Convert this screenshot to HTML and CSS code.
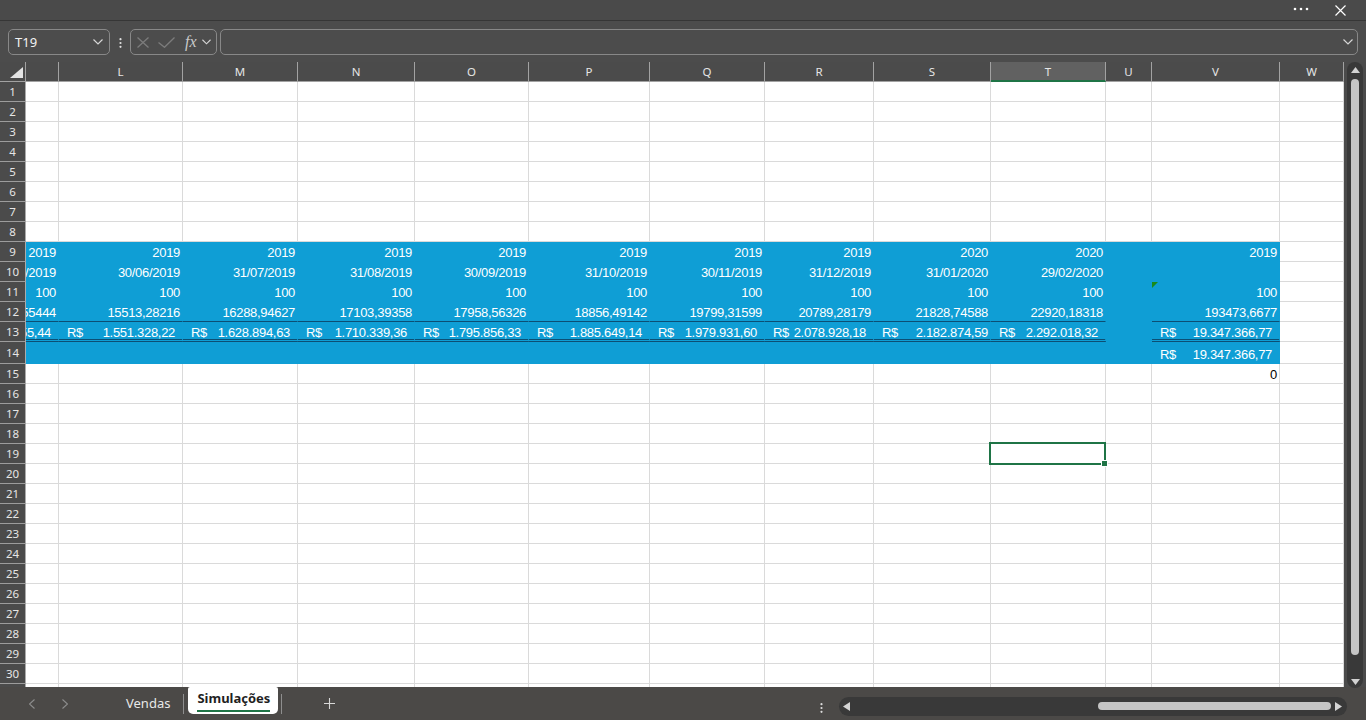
FILE: index.html
```html
<!DOCTYPE html>
<html lang="pt-BR">
<head>
    <meta charset="UTF-8">
    <meta name="viewport" content="width=device-width, initial-scale=1.0">
    <title>Simulações</title>
    <link rel="stylesheet" href="styles.css">
</head>
<body>
    <div class="titlebar">
        <svg class="more" width="16" height="4" viewBox="0 0 16 4"><circle cx="2" cy="2" r="1.3"/><circle cx="8" cy="2" r="1.3"/><circle cx="14" cy="2" r="1.3"/></svg>
        <svg class="close" width="11" height="11" viewBox="0 0 11 11"><path d="M0.5 0.5L10.5 10.5M10.5 0.5L0.5 10.5"/></svg>
    </div>

    <div class="formulabar">
        <div class="namebox">
            <span>T19</span>
            <svg class="chev" width="10" height="6" viewBox="0 0 10 6"><polyline points="0.5,0.5 5,5 9.5,0.5"/></svg>
        </div>
        <svg class="vdots" width="3" height="10" viewBox="0 0 3 10"><circle cx="1.5" cy="1.2" r="1.1"/><circle cx="1.5" cy="5" r="1.1"/><circle cx="1.5" cy="8.8" r="1.1"/></svg>
        <div class="fxbox">
            <svg class="cancel" width="12" height="11" viewBox="0 0 12 11"><path d="M0.5 0.5L11.5 10.5M11.5 0.5L0.5 10.5"/></svg>
            <svg class="enter" width="17" height="11" viewBox="0 0 17 11"><polyline points="0.5,5.5 6.5,10.3 16.5,0.5"/></svg>
            <span class="fx">fx</span>
            <svg class="chev" width="9" height="6" viewBox="0 0 10 6"><polyline points="0.5,0.5 5,5 9.5,0.5"/></svg>
        </div>
        <div class="formula">
            <svg class="chev" width="10" height="6" viewBox="0 0 10 6"><polyline points="0.5,0.5 5,5 9.5,0.5"/></svg>
        </div>
    </div>

    <div class="main">
        <div class="sheet">
            <div class="row head"><span class="corner"><svg width="13" height="11" viewBox="0 0 13 11"><polygon points="13,0 13,11 0,11"/></svg></span><span></span><span>L</span><span>M</span><span>N</span><span>O</span><span>P</span><span>Q</span><span>R</span><span>S</span><span class="on">T</span><span>U</span><span>V</span><span>W</span></div>

            <div class="row"><span class="rh">1</span><span></span><span></span><span></span><span></span><span></span><span></span><span></span><span></span><span></span><span></span><span></span><span></span><span></span></div>
            <div class="row"><span class="rh">2</span><span></span><span></span><span></span><span></span><span></span><span></span><span></span><span></span><span></span><span></span><span></span><span></span><span></span></div>
            <div class="row"><span class="rh">3</span><span></span><span></span><span></span><span></span><span></span><span></span><span></span><span></span><span></span><span></span><span></span><span></span><span></span></div>
            <div class="row"><span class="rh">4</span><span></span><span></span><span></span><span></span><span></span><span></span><span></span><span></span><span></span><span></span><span></span><span></span><span></span></div>
            <div class="row"><span class="rh">5</span><span></span><span></span><span></span><span></span><span></span><span></span><span></span><span></span><span></span><span></span><span></span><span></span><span></span></div>
            <div class="row"><span class="rh">6</span><span></span><span></span><span></span><span></span><span></span><span></span><span></span><span></span><span></span><span></span><span></span><span></span><span></span></div>
            <div class="row"><span class="rh">7</span><span></span><span></span><span></span><span></span><span></span><span></span><span></span><span></span><span></span><span></span><span></span><span></span><span></span></div>
            <div class="row"><span class="rh">8</span><span></span><span></span><span></span><span></span><span></span><span></span><span></span><span></span><span></span><span></span><span></span><span></span><span></span></div>

            <div class="row"><span class="rh">9</span><span class="f">2019</span><span class="f">2019</span><span class="f">2019</span><span class="f">2019</span><span class="f">2019</span><span class="f">2019</span><span class="f">2019</span><span class="f">2019</span><span class="f">2020</span><span class="f">2020</span><span class="f"></span><span class="f">2019</span><span></span></div>
            <div class="row"><span class="rh">10</span><span class="f">31/05/2019</span><span class="f">30/06/2019</span><span class="f">31/07/2019</span><span class="f">31/08/2019</span><span class="f">30/09/2019</span><span class="f">31/10/2019</span><span class="f">30/11/2019</span><span class="f">31/12/2019</span><span class="f">31/01/2020</span><span class="f">29/02/2020</span><span class="f"></span><span class="f"></span><span></span></div>
            <div class="row"><span class="rh">11</span><span class="f">100</span><span class="f">100</span><span class="f">100</span><span class="f">100</span><span class="f">100</span><span class="f">100</span><span class="f">100</span><span class="f">100</span><span class="f">100</span><span class="f">100</span><span class="f"></span><span class="f flag">100</span><span></span></div>
            <div class="row"><span class="rh">12</span><span class="f b1">14774,55444</span><span class="f b1">15513,28216</span><span class="f b1">16288,94627</span><span class="f b1">17103,39358</span><span class="f b1">17958,56326</span><span class="f b1">18856,49142</span><span class="f b1">19799,31599</span><span class="f b1">20789,28179</span><span class="f b1">21828,74588</span><span class="f b1">22920,18318</span><span class="f"></span><span class="f b1">193473,6677</span><span></span></div>
            <div class="row"><span class="rh">13</span><span class="f b2 pr">1.477.455,44</span><span class="f b2 acc"><em>R$</em>1.551.328,22</span><span class="f b2 acc"><em>R$</em>1.628.894,63</span><span class="f b2 acc"><em>R$</em>1.710.339,36</span><span class="f b2 acc"><em>R$</em>1.795.856,33</span><span class="f b2 acc"><em>R$</em>1.885.649,14</span><span class="f b2 acc"><em>R$</em>1.979.931,60</span><span class="f b2 acc"><em>R$</em>2.078.928,18</span><span class="f b2 acc tight"><em>R$</em>2.182.874,59</span><span class="f b2 acc"><em>R$</em>2.292.018,32</span><span class="f"></span><span class="f b2 acc"><em>R$</em>19.347.366,77</span><span></span></div>
            <div class="row tall"><span class="rh">14</span><span class="f"></span><span class="f"></span><span class="f"></span><span class="f"></span><span class="f"></span><span class="f"></span><span class="f"></span><span class="f"></span><span class="f"></span><span class="f"></span><span class="f"></span><span class="f acc"><em>R$</em>19.347.366,77</span><span></span></div>
            <div class="row"><span class="rh">15</span><span></span><span></span><span></span><span></span><span></span><span></span><span></span><span></span><span></span><span></span><span></span><span>0</span><span></span></div>

            <div class="row"><span class="rh">16</span><span></span><span></span><span></span><span></span><span></span><span></span><span></span><span></span><span></span><span></span><span></span><span></span><span></span></div>
            <div class="row"><span class="rh">17</span><span></span><span></span><span></span><span></span><span></span><span></span><span></span><span></span><span></span><span></span><span></span><span></span><span></span></div>
            <div class="row"><span class="rh">18</span><span></span><span></span><span></span><span></span><span></span><span></span><span></span><span></span><span></span><span></span><span></span><span></span><span></span></div>
            <div class="row"><span class="rh">19</span><span></span><span></span><span></span><span></span><span></span><span></span><span></span><span></span><span></span><span></span><span></span><span></span><span></span></div>
            <div class="row"><span class="rh">20</span><span></span><span></span><span></span><span></span><span></span><span></span><span></span><span></span><span></span><span></span><span></span><span></span><span></span></div>
            <div class="row"><span class="rh">21</span><span></span><span></span><span></span><span></span><span></span><span></span><span></span><span></span><span></span><span></span><span></span><span></span><span></span></div>
            <div class="row"><span class="rh">22</span><span></span><span></span><span></span><span></span><span></span><span></span><span></span><span></span><span></span><span></span><span></span><span></span><span></span></div>
            <div class="row"><span class="rh">23</span><span></span><span></span><span></span><span></span><span></span><span></span><span></span><span></span><span></span><span></span><span></span><span></span><span></span></div>
            <div class="row"><span class="rh">24</span><span></span><span></span><span></span><span></span><span></span><span></span><span></span><span></span><span></span><span></span><span></span><span></span><span></span></div>
            <div class="row"><span class="rh">25</span><span></span><span></span><span></span><span></span><span></span><span></span><span></span><span></span><span></span><span></span><span></span><span></span><span></span></div>
            <div class="row"><span class="rh">26</span><span></span><span></span><span></span><span></span><span></span><span></span><span></span><span></span><span></span><span></span><span></span><span></span><span></span></div>
            <div class="row"><span class="rh">27</span><span></span><span></span><span></span><span></span><span></span><span></span><span></span><span></span><span></span><span></span><span></span><span></span><span></span></div>
            <div class="row"><span class="rh">28</span><span></span><span></span><span></span><span></span><span></span><span></span><span></span><span></span><span></span><span></span><span></span><span></span><span></span></div>
            <div class="row"><span class="rh">29</span><span></span><span></span><span></span><span></span><span></span><span></span><span></span><span></span><span></span><span></span><span></span><span></span><span></span></div>
            <div class="row"><span class="rh">30</span><span></span><span></span><span></span><span></span><span></span><span></span><span></span><span></span><span></span><span></span><span></span><span></span><span></span></div>
            <div class="row"><span class="rh">31</span><span></span><span></span><span></span><span></span><span></span><span></span><span></span><span></span><span></span><span></span><span></span><span></span><span></span></div>

            <!-- active cell T19 -->
            <div class="selection"><i class="handle"></i></div>
        </div>

        <div class="vscroll">
            <div class="track">
                <svg width="9" height="6" viewBox="0 0 9 6"><polygon points="4.5,0 9,6 0,6"/></svg>
                <div class="vthumb"></div>
                <svg class="down" width="9" height="6" viewBox="0 0 9 6"><polygon points="0,0 9,0 4.5,6"/></svg>
            </div>
        </div>
    </div>

    <div class="tabbar">
        <div class="nav">
            <svg width="6" height="10" viewBox="0 0 6 10"><polyline points="5.5,0.5 0.5,5 5.5,9.5"/></svg>
            <svg width="6" height="10" viewBox="0 0 6 10"><polyline points="0.5,0.5 5.5,5 0.5,9.5"/></svg>
        </div>
        <span class="tab">Vendas</span>
        <span class="sep"></span>
        <span class="tab active"><span>Simulações</span></span>
        <span class="sep"></span>
        <svg class="plus" width="11" height="11" viewBox="0 0 11 11"><path d="M5.5 0V11M0 5.5H11"/></svg>

        <svg class="hdots" width="3" height="10" viewBox="0 0 3 10"><circle cx="1.5" cy="1.2" r="1.1"/><circle cx="1.5" cy="5" r="1.1"/><circle cx="1.5" cy="8.8" r="1.1"/></svg>
        <div class="htrack">
            <svg width="7" height="9" viewBox="0 0 7 9"><polygon points="7,0 7,9 0,4.5"/></svg>
            <div class="hthumb"></div>
            <svg width="7" height="9" viewBox="0 0 7 9"><polygon points="0,0 7,4.5 0,9"/></svg>
        </div>
    </div>
</body>
</html>
```

FILE: styles.css
```css
* {
    box-sizing: border-box;
}

body {
    margin: 0;
    width: 1366px;
    height: 720px;
    overflow: hidden;
    background: #4b4b4b;
    font-family: "Noto Sans", "Open Sans", sans-serif;
    color: #f0f0f0;
}

/* top strip */
.titlebar {
    height: 21px;
    background: #4a4a4a;
    border-bottom: 1px solid #363636;
    display: flex;
    justify-content: flex-end;
    align-items: center;
    gap: 26px;
    padding-right: 20px;
}
.more {
    fill: #fff;
    margin-bottom: 2px;
}
.close {
    fill: none;
    stroke: #fff;
    stroke-width: 1.2;
}

/* formula bar */
.formulabar {
    height: 41px;
    display: flex;
    align-items: flex-start;
    padding: 8px 8px 0 8px;
    background: #4c4c4c;
}
.chev {
    fill: none;
    stroke: #d6d6d6;
    stroke-width: 1.2;
}
.namebox {
    width: 102px;
    height: 26px;
    border: 1px solid #888;
    border-radius: 5px;
    display: flex;
    align-items: center;
    justify-content: space-between;
    padding: 0 6px;
    font-size: 13px;
    color: #f2f2f2;
}
.vdots {
    fill: #e0e0e0;
    margin: 9px 8px 0 9px;
}
.fxbox {
    width: 87px;
    height: 26px;
    border: 1px solid #888;
    border-radius: 5px;
    display: flex;
    align-items: center;
    padding-left: 6px;
    margin-right: 3px;
}
.cancel, .enter {
    fill: none;
    stroke: #7c7c7c;
    stroke-width: 1.3;
}
.enter {
    margin-left: 9px;
}
.fx {
    font-family: "Liberation Serif", "DejaVu Serif", serif;
    font-style: italic;
    font-size: 16px;
    color: #c9c9c9;
    margin-left: 10px;
    margin-right: 5px;
    line-height: 16px;
}
.formula {
    flex: 1;
    height: 26px;
    border: 1px solid #888;
    border-radius: 5px;
    display: flex;
    align-items: center;
    justify-content: flex-end;
    padding-right: 4px;
}

/* sheet */
.main {
    display: flex;
    height: 625px;
}
.sheet {
    position: relative;
    width: 1344px;
    height: 625px;
    overflow: hidden;
    background: #fff;
}
.row {
    display: grid;
    grid-template-columns: 26px 33px 124px 115px 117px 114px 121px 115px 109px 117px 115px 46px 128px 64px;
    height: 20px;
}
.row.tall {
    height: 22px;
}
.row > span {
    display: flex;
    justify-content: flex-end;
    padding: 1px 2px 0;
    border-right: 1px solid #dadada;
    border-bottom: 1px solid #dadada;
    font-family: "Liberation Sans", Arial, sans-serif;
    font-size: 13px;
    line-height: 19px;
    letter-spacing: -0.3px;
    white-space: nowrap;
    overflow: hidden;
    color: #000;
}
.row.tall > span {
    padding-top: 3px;
}

.row.head > span {
    justify-content: center;
    padding-top: 0;
    background: #4b4b4b;
    border-color: #a2a2a2;
    color: #e6e6e6;
    font-family: "Noto Sans", sans-serif;
    font-size: 11.5px;
    letter-spacing: 0;
}
.row.head > .on {
    background: #616161;
    border-bottom: 2px solid #1f7446;
}
.row.head > .corner {
    justify-content: flex-end;
    align-items: flex-end;
    padding: 0 2px 3px 0;
    fill: #e4e4e4;
}

.row > .rh {
    justify-content: center;
    padding-top: 0;
    background: #4b4b4b;
    border-right-color: #ababab;
    border-bottom-color: #9c9c9c;
    color: #e6e6e6;
    font-family: "Noto Sans", sans-serif;
    font-size: 11.5px;
    letter-spacing: 0;
}
.row.tall > .rh {
    padding-top: 1px;
}

/* blue block */
.row > .f {
    background: #0f9ed5;
    border-color: #0f9ed5;
    color: #fff;
}
.row > .b1 {
    border-bottom-color: #0c4f74;
}
.row > .b2 {
    border-bottom: 3px double #0c4f74;
}
.row > .acc {
    justify-content: space-between;
    padding-left: 8px;
    padding-right: 7px;
}
.row > .acc em {
    font-style: normal;
}
.row > .pr {
    padding-right: 7px;
}
.row > .tight {
    padding-right: 2px;
}
.row > .flag {
    position: relative;
}
.flag::before {
    content: "";
    position: absolute;
    left: 0;
    top: 0;
    border-top: 6px solid #1a8a1a;
    border-right: 6px solid transparent;
}

.selection {
    position: absolute;
    left: 989px;
    top: 380px;
    width: 117px;
    height: 23px;
    border: 2px solid #1f7446;
}
.handle {
    position: absolute;
    right: -4px;
    bottom: -4px;
    width: 7px;
    height: 7px;
    background: #1f7446;
    border: 1px solid #fff;
}

/* vertical scrollbar */
.vscroll {
    width: 22px;
    padding: 0 3px;
    background: #4b4b4b;
}
.track {
    height: 626px;
    background: #393939;
    border-radius: 8px;
    display: flex;
    flex-direction: column;
    align-items: center;
    padding: 5px 0 3px;
    fill: #d2d2d2;
}
.vthumb {
    width: 8px;
    height: 576px;
    margin-top: 6px;
    border-radius: 4px;
    background: #c5c5c5;
}
.track .down {
    margin-top: auto;
}

/* sheet tabs */
.tabbar {
    height: 33px;
    display: flex;
    align-items: center;
    background: #4b4947;
    font-size: 13px;
}
.nav {
    width: 110px;
    display: flex;
    gap: 27px;
    padding-left: 29px;
    fill: none;
    stroke: #8d8d8d;
    stroke-width: 1.1;
}
.tab {
    padding: 0 13px 0 16px;
    color: #e8e8e8;
    line-height: 17px;
}
.sep {
    width: 1px;
    height: 20px;
    background: #8e8e8e;
}
.tab.active {
    align-self: flex-start;
    height: 27px;
    margin: 0 3px 0 4px;
    padding: 3px 8px 0 9px;
    background: #fff;
    border-radius: 2px 2px 5px 5px;
    color: #1f1f1f;
    font-weight: bold;
}
.tab.active span {
    display: block;
    padding-bottom: 3px;
    border-bottom: 2px solid #1f7446;
}
.plus {
    margin-left: 42px;
    fill: none;
    stroke: #d8d8d8;
    stroke-width: 1.1;
}
.hdots {
    margin-left: auto;
    margin-top: 8px;
    fill: #dcdcdc;
}
.htrack {
    width: 508px;
    height: 19px;
    margin: 5px 19px 0 16px;
    border-radius: 10px;
    background: #393939;
    display: flex;
    align-items: center;
    padding: 0 5px 0 4px;
    fill: #d4d4d4;
}
.hthumb {
    width: 233px;
    height: 8px;
    margin: 0 4px 0 auto;
    border-radius: 4px;
    background: #c5c5c5;
}
```
